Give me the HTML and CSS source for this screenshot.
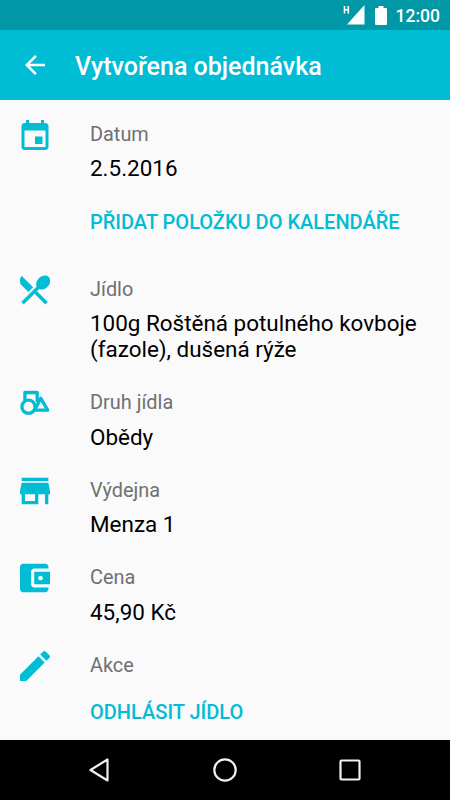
FILE: index.html
```html
<!DOCTYPE html>
<html lang="cs">
<head>
    <meta charset="UTF-8">
    <meta name="viewport" content="width=device-width, initial-scale=1.0">
    <title>Vytvořena objednávka</title>
    <link rel="stylesheet" href="styles.css">
</head>
<body>
    <div class="screen">
        <div class="status">
            <svg class="signal" viewBox="0 0 22 20">
                <path d="M1.500 1v7.500M5.300 1v7.500M1.500 4.700h4" fill="none" stroke="#fff" stroke-width="1.600"/>
                <path d="M21.500 0v19.500H4z" fill="#fff"/>
            </svg>
            <svg class="battery" viewBox="0 0 12 19">
                <path d="M3.500 0h5v2H11q1 0 1 1v15q0 1-1 1H1q-1 0-1-1V3q0-1 1-1h2.500z" fill="#fff"/>
            </svg>
            <span class="clock">12:00</span>
        </div>
        <div class="toolbar">
            <a href="javascript:;" class="back">
                <svg viewBox="4 4 16 16"><path d="M20 11H7.830l5.590-5.590L12 4l-8 8 8 8 1.410-1.410L7.830 13H20z" fill="#fff"/></svg>
            </a>
            <h1>Vytvořena objednávka</h1>
        </div>
        <ul class="list">
            <li>
                <svg class="icon" viewBox="2 1 20 20"><path d="M17 12h-5v5h5zM16 1v2H8V1H6v2H5c-1.110 0-2 .9-2 2v14c0 1.100.89 2 2 2h14c1.100 0 2-.9 2-2V5c0-1.100-.9-2-2-2h-1V1zm3 18H5V8h14z"/></svg>
                <div class="info">
                    <p class="label">Datum</p>
                    <p class="value">2.5.2016</p>
                    <a href="javascript:;" class="btn add">Přidat položku do kalendáře</a>
                </div>
            </li>
            <li>
                <svg class="icon food" viewBox="2.740 2.700 19.100 19.100"><path d="M8.100 13.340l2.830-2.830L3.910 3.500c-1.560 1.560-1.560 4.090 0 5.660l4.190 4.180zm6.780-1.810c1.530.71 3.680.21 5.270-1.380 1.910-1.910 2.280-4.650.81-6.120-1.460-1.460-4.200-1.100-6.120.81-1.590 1.590-2.090 3.740-1.380 5.270L3.700 19.870l1.410 1.410L12 14.410l6.880 6.880 1.410-1.410L13.410 13z"/></svg>
                <div class="info">
                    <p class="label">Jídlo</p>
                    <p class="value">100g Roštěná potulného kovboje (fazole), dušená rýže</p>
                </div>
            </li>
            <li>
                <svg class="icon" viewBox="0 0 30 30">
                    <g class="line">
                        <path d="M4.900 12V4.500h12.300V14"/>
                        <circle cx="8.500" cy="18.800" r="6.600"/>
                        <path d="M20.800 10.300l6.900 11.900H14.500z"/>
                    </g>
                </svg>
                <div class="info">
                    <p class="label">Druh jídla</p>
                    <p class="value">Obědy</p>
                </div>
            </li>
            <li>
                <svg class="icon" viewBox="3 3 18 18"><path d="M20 4H4v2h16zm1 10v-2l-1-5H4l-1 5v2h1v6h10v-6h4v6h2v-6zm-9 4H6v-4h6z"/></svg>
                <div class="info">
                    <p class="label">Výdejna</p>
                    <p class="value">Menza 1</p>
                </div>
            </li>
            <li>
                <svg class="icon" viewBox="3 2.500 19 19"><path d="M21 18v1c0 1.100-.9 2-2 2H5c-1.110 0-2-.9-2-2V5c0-1.100.89-2 2-2h14c1.100 0 2 .9 2 2v1h-9c-1.110 0-2 .9-2 2v8c0 1.100.89 2 2 2zm-9-2h10V8H12zm4-2.500c-.83 0-1.500-.67-1.500-1.500s.67-1.500 1.500-1.500 1.500.67 1.500 1.500-.67 1.500-1.500 1.500z"/></svg>
                <div class="info">
                    <p class="label">Cena</p>
                    <p class="value">45,90 Kč</p>
                </div>
            </li>
            <li>
                <svg class="icon" viewBox="3 3 18 18"><path d="M3 17.250V21h3.750L17.810 9.940l-3.750-3.750zM20.710 7.040c.39-.39.39-1.020 0-1.410l-2.340-2.340c-.39-.39-1.020-.39-1.410 0l-1.830 1.830 3.750 3.750z"/></svg>
                <div class="info">
                    <p class="label">Akce</p>
                    <a href="javascript:;" class="btn cancel">Odhlásit jídlo</a>
                </div>
            </li>
        </ul>
        <div class="nav">
            <svg viewBox="0 0 26 26"><path d="M3.500 13L20.500 2.500v21z"/></svg>
            <svg viewBox="0 0 26 26"><circle cx="13" cy="13" r="10.700"/></svg>
            <svg viewBox="0 0 26 26"><rect x="3.500" y="3.500" width="19" height="19" rx="1"/></svg>
        </div>
    </div>
</body>
</html>
```
FILE: styles.css
```css
*{
    margin: 0;
    padding: 0;
    list-style: none;
    text-decoration: none;
    box-sizing: border-box;
}
body{
    font-family: Roboto, "Liberation Sans", sans-serif;
    background-color: #fafafa;
}
.screen{
    width: 450px;
    height: 800px;
    display: flex;
    flex-direction: column;
    overflow: hidden;
}
.status{
    height: 30px;
    flex: none;
    display: flex;
    align-items: center;
    justify-content: flex-end;
    padding-right: 10px;
    background-color: #0097a7;
    color: #fff;
}
.signal{
    width: 22px;
    height: 20px;
    margin-right: 10px;
}
.battery{
    width: 12px;
    height: 19px;
    margin-right: 9px;
}
.clock{
    padding-top: 2px;
    font-size: 17.5px;
    font-weight: 500;
    line-height: 28px;
}
.toolbar{
    height: 70px;
    flex: none;
    display: flex;
    align-items: center;
    padding-left: 25px;
    background-color: #00bcd4;
    color: #fff;
}
.back svg{
    display: block;
    width: 20px;
    height: 20px;
}
.toolbar h1{
    margin-left: 30px;
    padding-top: 3px;
    font-size: 25px;
    font-weight: 500;
    line-height: 30px;
}
.list{
    flex: 1;
    min-height: 0;
    padding: 23px 20px 0;
}
.list li{
    display: flex;
    margin-bottom: 28.5px;
}
.icon{
    width: 30px;
    height: 30px;
    margin: -3px 40px 0 0;
    flex: none;
    fill: #00bcd4;
}
.food{
    stroke: #00bcd4;
    stroke-width: .3;
}
.line{
    fill: none;
    stroke: #00bcd4;
    stroke-width: 3.3;
    stroke-linejoin: round;
}
.info{
    flex: 1;
}
.label{
    font-size: 19.9px;
    line-height: 23px;
    color: #707070;
}
.value{
    margin-top: 9.3px;
    padding-bottom: .7px;
    font-size: 22.45px;
    line-height: 26px;
    color: #000;
}
.btn{
    display: block;
    font-size: 20px;
    font-weight: 500;
    line-height: 24px;
    text-transform: uppercase;
    color: #00bcd4;
}
.add{
    margin: 28.5px 0 14.8px;
}
.cancel{
    margin-top: 23px;
}
.nav{
    height: 60px;
    flex: none;
    display: flex;
    align-items: center;
    justify-content: center;
    gap: 99px;
    background-color: #000;
}
.nav svg{
    width: 26px;
    height: 26px;
    fill: none;
    stroke: #f0f0f0;
    stroke-width: 2.2;
    stroke-linejoin: round;
}
```
